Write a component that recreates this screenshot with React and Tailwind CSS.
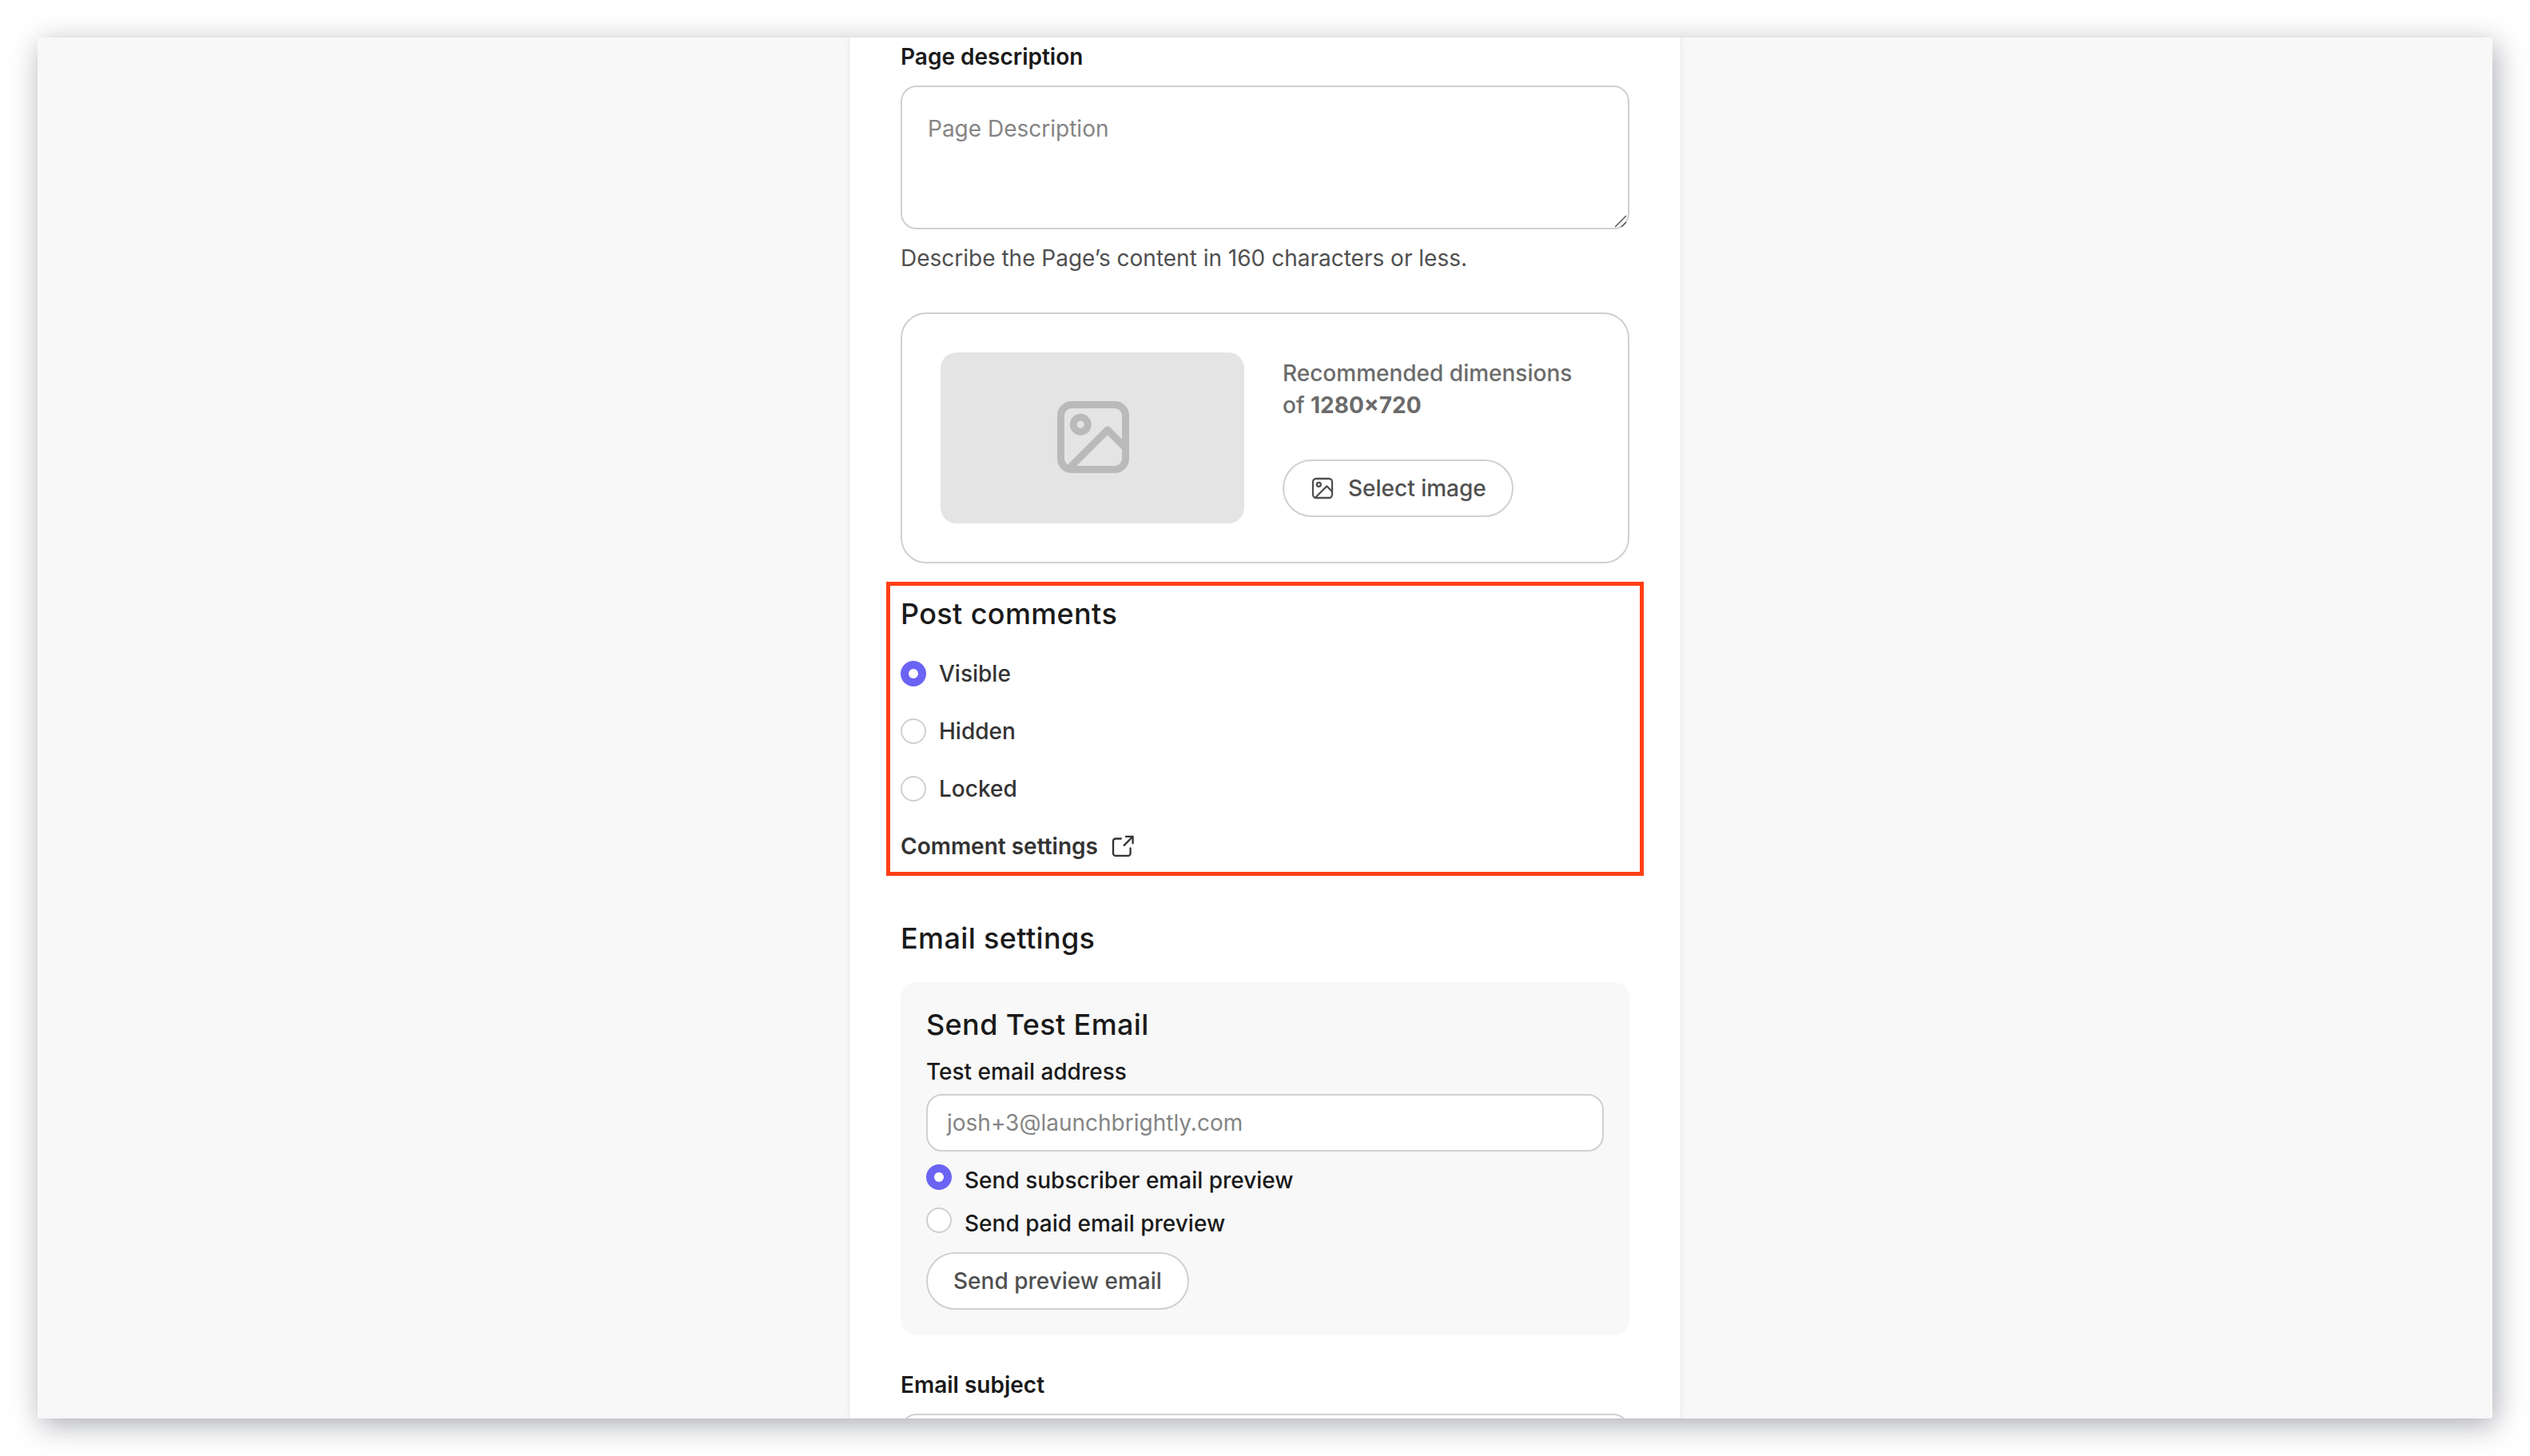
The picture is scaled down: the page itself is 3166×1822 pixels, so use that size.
import clsx from 'clsx';

const COMMENT_OPTIONS = ['Visible', 'Hidden', 'Locked'];
const PREVIEW_OPTIONS = ['Send subscriber email preview', 'Send paid email preview'];

function ImageIcon({ className, strokeWidth = 2, r = 2 }) {
  return (
    <svg className={className} fill="none" stroke="currentColor" strokeWidth={strokeWidth} viewBox="0 0 24 24">
      <rect x="3" y="3" width="18" height="18" rx="3" />
      <circle cx="8.5" cy="8.5" r={r} />
      <path strokeLinejoin="round" d="M5 21L16 10l5 5" />
    </svg>
  );
}

function ExternalIcon({ className }) {
  return (
    <svg className={className} fill="none" stroke="currentColor" strokeWidth="2.3" viewBox="0 0 32 32">
      <path strokeLinecap="round" d="M14.8 6.5H8a3 3 0 00-3 3v15.4a3 3 0 003 3h15.6a3 3 0 003-3v-6.6" />
      <path strokeLinecap="round" d="M21 3.9h8.6v8.4M29.2 4.3L18.6 14.9" />
    </svg>
  );
}

function Radio({ checked }) {
  return (
    <span
      className={clsx(
        'flex size-8 shrink-0 items-center justify-center rounded-full',
        checked ? 'bg-[#6b63f3]' : 'border-2 border-[#d0d0d0] bg-white'
      )}
    >
      {checked && <span className="size-3 rounded-full bg-white" />}
    </span>
  );
}

function ImagePicker() {
  return (
    <div className="mt-12 flex h-[314px] gap-12 rounded-[32px] border-2 border-[#d0d0d0] p-12">
      <div className="flex h-[214px] w-[380px] items-center justify-center rounded-[20px] bg-[#e4e4e4]">
        <ImageIcon className="mb-[3px] ml-0.5 size-[108px] text-[#bababa]" />
      </div>
      <div>
        <p className="mt-1.5 font-medium text-[#6b6b6b]">
          Recommended dimensions
          <br />
          of <b>1280×720</b>
        </p>
        <button className="mt-12 flex h-[72px] items-center gap-4 rounded-full border-2 border-[#d0d0d0] px-8 font-medium text-[#505050]">
          <ImageIcon className="size-8" strokeWidth={1.7} r={1.9} />
          Select image
        </button>
      </div>
    </div>
  );
}

function PostComments() {
  return (
    <section className="relative mt-[43px]">
      {/* highlight frame around the section */}
      <div className="absolute -left-[18px] -top-5 h-[368px] w-[948px] border-[5px] border-[#ff3f17]" />
      <h2 className="text-4xl/10 font-medium tracking-[0.01em]">Post comments</h2>
      <div className="mt-[35px] flex flex-col gap-8">
        {COMMENT_OPTIONS.map((label, i) => (
          <label key={label} className="flex items-center gap-4 font-medium text-[#333]">
            <Radio checked={i === 0} />
            {label}
          </label>
        ))}
      </div>
      <a className="mt-8 flex items-center gap-3.5 font-semibold text-[#333]">
        Comment settings
        <ExternalIcon className="size-8" />
      </a>
    </section>
  );
}

function TestEmail() {
  return (
    <section className="mt-[35px] h-[442px] rounded-[20px] bg-[#f8f8f8] px-8 pt-[33px]">
      <h3 className="text-4xl/10 font-medium tracking-[0.01em]">Send Test Email</h3>
      <label className="mt-[19px] block font-medium">Test email address</label>
      <div className="mt-2 flex h-[72px] items-center rounded-[20px] border-2 border-[#d0d0d0] bg-white px-6 text-[#858585]">
        josh+3@launchbrightly.com
      </div>
      <div className="mt-4 flex flex-col gap-3.5">
        {PREVIEW_OPTIONS.map((label, i) => (
          <label key={label} className="flex gap-4 font-medium">
            <Radio checked={i === 0} />
            {label}
          </label>
        ))}
      </div>
      <button className="mt-4 flex h-[72px] items-center rounded-full border-2 border-[#d0d0d0] bg-white px-8 font-medium text-[#505050]">
        Send preview email
      </button>
    </section>
  );
}

function App() {
  return (
    <div className="h-[1822px] w-[3166px] overflow-hidden bg-white p-[47px] font-['Inter',sans-serif] text-[28px] leading-10 text-[#1a1a1a]">
      <div className="h-[1728px] w-[3072px] overflow-hidden rounded-[3px] bg-[#f8f8f8] shadow-[4px_8px_36px_rgba(20,25,45,0.36)]">
        <main className="mx-auto h-full w-[1040px] bg-white px-16 pt-1 shadow-[0_0_2px_rgba(0,0,0,0.12),0_0_8px_rgba(0,0,0,0.06)]">
          <label className="block font-semibold">Page description</label>
          <div className="relative mt-4 h-[180px] rounded-[20px] border-2 border-[#d0d0d0] p-8 text-[#858585]">
            Page Description
            <svg className="absolute bottom-0 right-0 size-4" stroke="#555" strokeWidth="1.5" viewBox="0 0 16 16">
              <path d="M0 15L14 1M8 15L14 9" />
            </svg>
          </div>
          <p className="mt-4 text-[#505050]">Describe the Page’s content in 160 characters or less.</p>

          <ImagePicker />
          <PostComments />

          <h2 className="mt-[75px] text-4xl/10 font-medium tracking-[0.01em]">Email settings</h2>
          <TestEmail />

          <label className="mt-[42px] block font-semibold">Email subject</label>
          <div className="mt-4 h-[72px] rounded-[20px] border-2 border-[#d0d0d0]" />
        </main>
      </div>
    </div>
  );
}

export default App;
